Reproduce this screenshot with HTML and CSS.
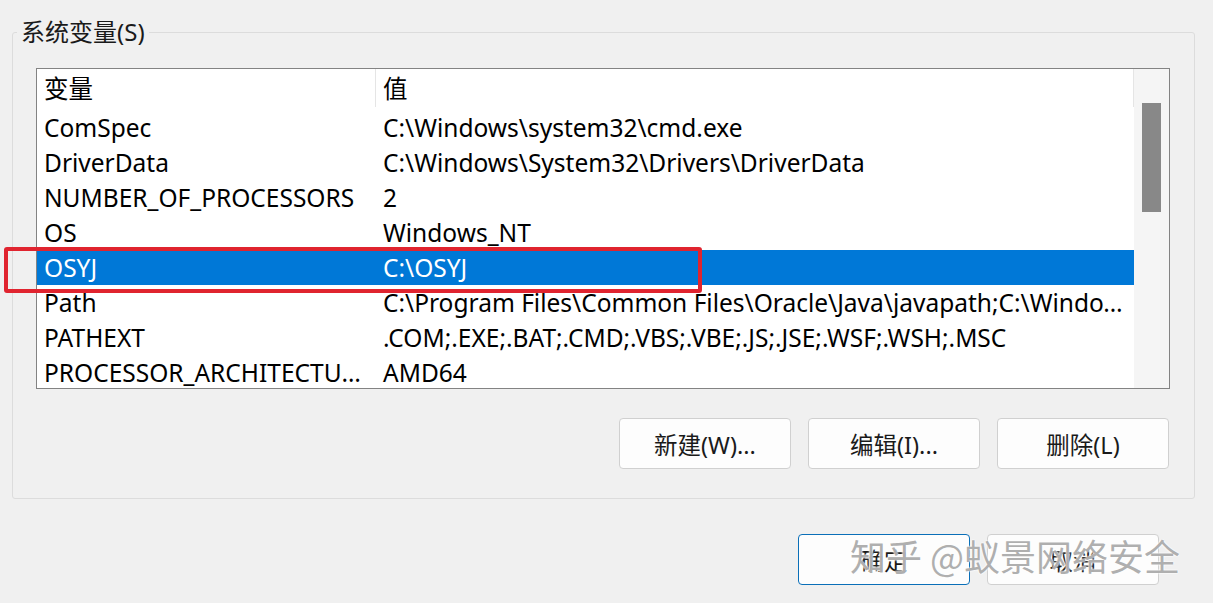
FILE: index.html
```html
<!DOCTYPE html>
<html lang="zh-CN">
<head>
<meta charset="utf-8">
<title>系统变量</title>
<link rel="stylesheet" href="styles.css">
</head>
<body>
<div class="dialog">
  <div class="group">
    <div class="group-title">系统变量(S)</div>
    <div class="list">
      <div class="list-main">
        <div class="row header">
          <div class="c1">变量</div>
          <div class="c2">值</div>
        </div>
        <div class="row"><div class="c1">ComSpec</div><div class="c2">C:\Windows\system32\cmd.exe</div></div>
        <div class="row"><div class="c1">DriverData</div><div class="c2">C:\Windows\System32\Drivers\DriverData</div></div>
        <div class="row"><div class="c1">NUMBER_OF_PROCESSORS</div><div class="c2">2</div></div>
        <div class="row"><div class="c1">OS</div><div class="c2">Windows_NT</div></div>
        <div class="row selected"><div class="c1">OSYJ</div><div class="c2">C:\OSYJ</div></div>
        <div class="row"><div class="c1">Path</div><div class="c2">C:\Program Files\Common Files\Oracle\Java\javapath;C:\Windows\system32;C:\Windows</div></div>
        <div class="row"><div class="c1">PATHEXT</div><div class="c2">.COM;.EXE;.BAT;.CMD;.VBS;.VBE;.JS;.JSE;.WSF;.WSH;.MSC</div></div>
        <div class="row"><div class="c1">PROCESSOR_ARCHITECTURE</div><div class="c2">AMD64</div></div>
      </div>
      <div class="scrollbar"><div class="thumb"></div></div>
    </div>
    <div class="actions">
      <button class="btn">新建(W)...</button>
      <button class="btn">编辑(I)...</button>
      <button class="btn">删除(L)</button>
    </div>
  </div>
  <div class="footer">
    <button class="btn default">确定</button>
    <button class="btn">取消</button>
  </div>
  <div class="highlight"></div>
  <div class="watermark">知乎 @蚁景网络安全</div>
</div>
</body>
</html>
```
FILE: styles.css
```css
* { box-sizing: border-box; }
html, body {
  margin: 0;
  padding: 0;
  background: #f0f0f0;
}
body {
  width: 1213px;
  height: 603px;
  overflow: hidden;
  font-family: "Noto Sans", "Noto Sans CJK SC", sans-serif;
  color: #000;
}
.dialog {
  position: relative;
  width: 1213px;
  height: 603px;
  padding: 32px 0 0 12px;
}
.group {
  position: relative;
  width: 1183px;
  height: 467px;
  border: 1px solid #dcdcdc;
  border-radius: 3px;
  padding: 35px 0 0 23px;
}
.group-title {
  position: absolute;
  left: 4px;
  top: -17px;
  padding: 0 4px;
  background: #f0f0f0;
  font-size: 24px;
  line-height: 32px;
  color: #1a1a1a;
}
.list {
  display: flex;
  width: 1134px;
  height: 321px;
  border: 1px solid #838383;
  background: #fff;
  overflow: hidden;
}
.list-main {
  width: 1097px;
  flex: none;
}
.row {
  display: flex;
  height: 35px;
  align-items: center;
  font-size: 24.5px;
  line-height: 33px;
  white-space: nowrap;
}
.row.header {
  height: 41px;
  padding-bottom: 3px;
}
.row.header .c1,
.row.header .c2 {
  border-right: 1px solid #e5e5e5;
  height: 100%;
  display: flex;
  align-items: center;
}
.c1 {
  width: 339px;
  padding-left: 7px;
  padding-right: 10px;
  overflow: hidden;
  text-overflow: ellipsis;
  flex: none;
}
.c2 {
  width: 758px;
  padding-left: 7px;
  padding-right: 8px;
  overflow: hidden;
  text-overflow: ellipsis;
  flex: none;
}
.row.header .c1 { padding-right: 0; }
.row.selected {
  background: #0078d7;
  color: #fff;
}
.scrollbar {
  width: 35px;
  flex: none;
  background: #f5f5f5;
  padding: 34px 0 0 8px;
}
.thumb {
  width: 19px;
  height: 109px;
  background: #888888;
}
.actions {
  display: flex;
  justify-content: flex-end;
  gap: 17px;
  margin-top: 29px;
  padding-right: 25px;
}
.btn {
  width: 172px;
  height: 51px;
  background: #fdfdfd;
  border: 1px solid #d0d0d0;
  border-radius: 4px;
  font-family: "Noto Sans", "Noto Sans CJK SC", sans-serif;
  font-size: 23.5px;
  color: #1a1a1a;
  padding: 0;
}
.footer {
  display: flex;
  justify-content: flex-end;
  gap: 17px;
  margin-top: 35px;
  padding-right: 54px;
}
.btn.default {
  border: 1px solid #0a6fb8;
  background: #fdfdfd;
}
.highlight {
  position: absolute;
  left: 4px;
  top: 247px;
  width: 698px;
  height: 46px;
  border: 4px solid #e0242f;
  border-radius: 3px;
}
.watermark {
  position: absolute;
  left: 850px;
  top: 528px;
  font-size: 36px;
  line-height: 54px;
  color: rgba(140, 140, 140, 0.7);
  text-shadow: 0 0 2px #fff, 0 0 2px #fff;
  white-space: nowrap;
  font-family: "Noto Sans CJK SC", sans-serif;
}
```
